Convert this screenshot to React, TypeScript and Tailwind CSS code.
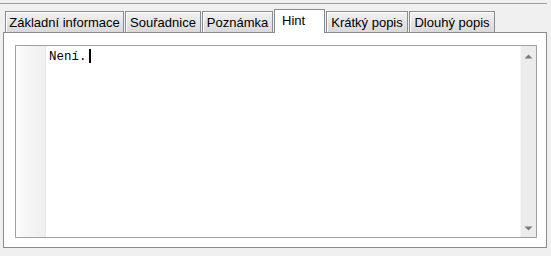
const tabs = [
  { label: "Základní informace", w: "w-[119px]" },
  { label: "Souřadnice", w: "w-[76px]" },
  { label: "Poznámka", w: "w-[71px]" },
  { label: "Hint", w: "w-[51px]", active: true },
  { label: "Krátký popis", w: "w-[82px]" },
  { label: "Dlouhý popis", w: "w-[86px]" },
];

function Tab({ label, w, active }: { label: string; w: string; active?: boolean }) {
  if (active) {
    return (
      <div
        className={`${w} relative z-10 -mb-px flex h-[24px] shrink-0 items-start border border-b-0 border-[#898c95] bg-white pl-[7px] pt-[3px] text-black`}
      >
        {label}
      </div>
    );
  }
  return (
    <div
      className={`${w} flex h-[21px] shrink-0 items-start justify-center border border-b-0 border-[#898c95] bg-gradient-to-b from-[#f2f2f2] to-[#d9d9d9] pt-[3px] text-black shadow-[inset_1px_1px_0_#ffffff]`}
    >
      {label}
    </div>
  );
}

function ScrollArrow({ up }: { up?: boolean }) {
  return (
    <svg width="9" height="5" viewBox="0 0 9 5">
      {up ? (
        <path d="M4.5 0.5 L8.5 4.5 L0.5 4.5 Z" fill="#7a7a7a" />
      ) : (
        <path d="M0.5 0.5 L8.5 0.5 L4.5 4.5 Z" fill="#7a7a7a" />
      )}
    </svg>
  );
}

export default function App() {
  return (
    <div className="h-[256px] w-[551px] overflow-hidden bg-[#f0f0f0] pt-[3px] font-['Liberation_Sans',Arial,sans-serif] text-[13px] leading-[15px]">
      <div className="h-px w-[547px] bg-[#a0a0a0]" />
      <div className="mt-[5px] flex items-end gap-px pl-[5px]">
        {tabs.map((t) => (
          <Tab key={t.label} {...t} />
        ))}
      </div>
      <div className="ml-[3px] h-[216px] w-[544px] border border-[#898c95] bg-white pl-[11px] pt-[12px]">
        <div className="flex h-[193px] w-[522px] border border-[#a0a0a0]">
          <div className="w-[29px] bg-gradient-to-r from-[#fbfbfb] to-[#efefef]" />
          <div className="w-px bg-[#e8e8e8]" />
          <div className="flex flex-1 items-start pl-[3px] pt-[4px] font-['Liberation_Mono','Courier_New',monospace] text-[12.5px] leading-[14px] text-black">
            <span>Není.</span>
            <span className="ml-[2px] mt-[-1px] h-[14px] w-[2px] bg-black" />
          </div>
          <div className="flex w-[16px] flex-col items-center justify-between bg-[#ececec] pb-[6px] pt-[8px] shadow-[inset_1px_0_0_#f6f6f6]">
            <ScrollArrow up />
            <ScrollArrow />
          </div>
        </div>
      </div>
    </div>
  );
}
